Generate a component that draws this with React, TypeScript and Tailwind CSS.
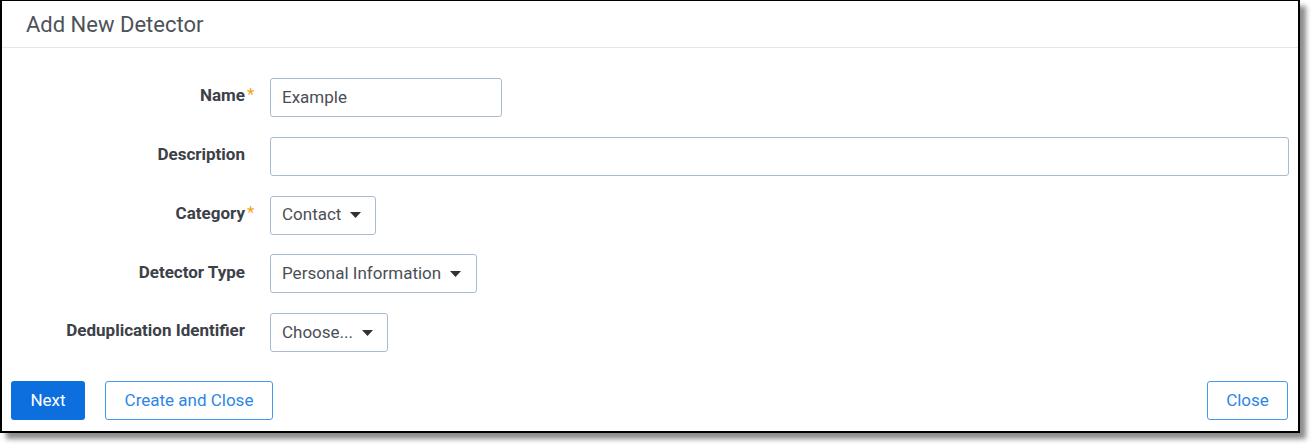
import React from "react";

// Small filled caret used by the select-style dropdowns
const Caret = () => (
  <svg width="11" height="6" viewBox="0 0 11 6" className="ml-[9px] shrink-0">
    <path d="M0 0 L11 0 L5.5 6 Z" fill="#2f3337" />
  </svg>
);

type Row = {
  label: string;
  required?: boolean;
  field: React.ReactNode;
};

const inputBox =
  "h-[39px] border border-[#a9bbd3] rounded-[3px] bg-white flex items-center px-[11px] text-[17px] text-[#4a4f56]";

export default function App() {
  const rows: Row[] = [
    {
      label: "Name",
      required: true,
      field: <div className={`${inputBox} w-[232px] border-[#8eaad0]`}>Example</div>,
    },
    {
      label: "Description",
      field: <div className={`${inputBox} w-[1019px]`} />,
    },
    {
      label: "Category",
      required: true,
      field: (
        <div className={`${inputBox} w-[106px]`}>
          <span>Contact</span>
          <Caret />
        </div>
      ),
    },
    {
      label: "Detector Type",
      field: (
        <div className={`${inputBox} w-[207px]`}>
          <span>Personal Information</span>
          <Caret />
        </div>
      ),
    },
    {
      label: "Deduplication Identifier",
      field: (
        <div className={`${inputBox} w-[118px]`}>
          <span>Choose...</span>
          <Caret />
        </div>
      ),
    },
  ];

  return (
    <div className="w-[1315px] h-[448px] bg-white font-['Roboto',sans-serif]">
      <div className="w-[1300px] h-[433px] bg-white border-2 border-t border-black flex flex-col shadow-[6px_6px_5px_rgba(0,0,0,0.45)]">
        {/* Header */}
        <div className="h-[47px] border-b border-[#dfe7f1] pl-[24px] flex items-center text-[22px] text-[#4d5259]">
          Add New Detector
        </div>

        {/* Form */}
        <div className="flex flex-col gap-[19.75px] pt-[30px]">
          {rows.map((row) => (
            <div key={row.label} className="flex items-center">
              <div className="w-[243px] text-right text-[17px] font-bold text-[#3c4047] relative -mt-[3px]">
                {row.label}
                {row.required && (
                  <span className="absolute left-[245px] -top-[1px] text-[#f5a11c] font-normal">*</span>
                )}
              </div>
              <div className="ml-[25px]">{row.field}</div>
            </div>
          ))}
        </div>

        {/* Footer */}
        <div className="mt-auto flex items-center justify-between pl-[9px] pr-[10px] pb-[11px]">
          <div className="flex gap-[20px]">
            <button className="h-[39px] w-[74px] rounded-[3px] bg-[#0d6fdd] text-white text-[17px]">
              Next
            </button>
            <button className="h-[39px] w-[168px] rounded-[3px] border border-[#4a98ee] text-[#2c86e6] text-[17px] bg-white">
              Create and Close
            </button>
          </div>
          <button className="h-[39px] w-[81px] rounded-[3px] border border-[#4a98ee] text-[#2c86e6] text-[17px] bg-white">
            Close
          </button>
        </div>
      </div>
    </div>
  );
}
